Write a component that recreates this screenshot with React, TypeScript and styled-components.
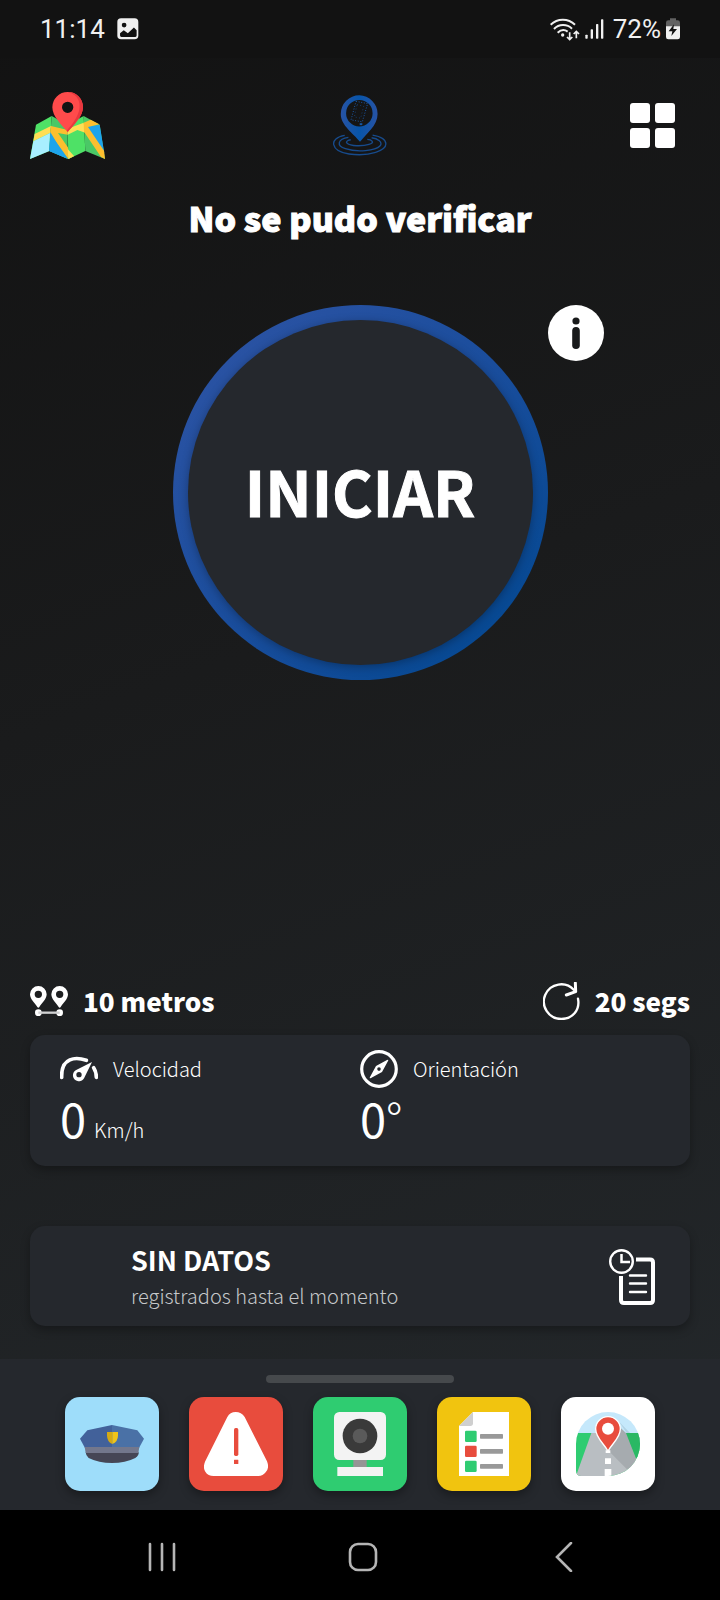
import React from "react";
import styled, { createGlobalStyle } from "styled-components";

const sans = `"Noto Sans CJK SC", "Noto Sans", sans-serif`;
const surface = "#25282d";

const GlobalStyle = createGlobalStyle`
  *, *::before, *::after { box-sizing: border-box; }
  body { margin: 0; background: #000; }
  button { border: 0; padding: 0; margin: 0; background: none; color: inherit; font: inherit; cursor: pointer; }
  h1, h2, p { margin: 0; }
  svg { display: block; }
`;

const Screen = styled.div`
  display: flex;
  flex-direction: column;
  min-height: 100vh;
  color: #fff;
  font-family: ${sans};
  background: linear-gradient(160deg, #121212 0%, #1a1b1c 40%, #23272a 90%);
`;

const StatusBar = styled.div`
  display: flex;
  align-items: center;
  justify-content: space-between;
  height: 58px;
  padding: 0 40px;
  background: #121212;
  color: #f0f0f0;
  font: 400 26px/32px Roboto, sans-serif;
`;

const StatusGroup = styled.div<{ $gap: number }>`
  display: flex;
  align-items: center;
  gap: ${(p) => p.$gap}px;
`;

const Header = styled.header`
  display: grid;
  grid-template-columns: 1fr auto 1fr;
  align-items: center;
  height: 106px;
  margin: 14px 45px 0 30px;
`;

const IconButton = styled.button<{ $align?: string }>`
  justify-self: ${(p) => p.$align ?? "start"};
`;

const LogoBox = styled.div`
  padding-left: 15px;
`;

const Title = styled.h1`
  margin-top: 20px;
  text-align: center;
  font-size: 34px;
  line-height: 40px;
  font-weight: 900;
  -webkit-text-stroke: 1px currentColor;
`;

const StartArea = styled.section`
  display: grid;
  grid-template-columns: 1fr auto 1fr;
  align-items: start;
  margin-top: 67px;
`;

const StartButton = styled.button`
  grid-column: 2;
  width: 375px;
  height: 375px;
  padding: 15px;
  border-radius: 50%;
  background: linear-gradient(135deg, #2f54a5 0%, #1a4d9c 50%, #00478f 100%);
`;

const StartFace = styled.span`
  display: flex;
  align-items: center;
  justify-content: center;
  height: 100%;
  padding-bottom: 6px;
  border-radius: 50%;
  background: ${surface};
  box-shadow: 0 2px 10px rgba(0, 0, 0, 0.3);
  font-size: 62px;
  line-height: 80px;
  font-weight: 700;
  -webkit-text-stroke: 1px currentColor;
`;

const Content = styled.main`
  display: flex;
  flex: 1;
  flex-direction: column;
  justify-content: flex-end;
  padding: 60px 30px 33px;
`;

const SettingsRow = styled.div`
  display: flex;
  justify-content: space-between;
  margin-bottom: 15px;
`;

const Setting = styled.div`
  display: flex;
  align-items: center;
  gap: 15px;
  height: 38px;
  font-size: 26px;
  line-height: 36px;
  font-weight: 900;
`;

const Panel = styled.section`
  border-radius: 15px;
  background: ${surface};
  box-shadow: 0 4px 10px rgba(0, 0, 0, 0.3);
`;

const Metrics = styled(Panel)`
  display: grid;
  grid-template-columns: 1fr 1fr;
  padding: 15px 30px 16px;
`;

const MetricLabel = styled.h2`
  display: flex;
  align-items: center;
  gap: 15px;
  height: 38px;
  font-size: 20px;
  line-height: 30px;
  font-weight: 300;
`;

const MetricValue = styled.p`
  display: flex;
  align-items: baseline;
  height: 62px;
  font-size: 47px;
  line-height: 60px;
  font-weight: 400;
`;

const Unit = styled.span<{ $large?: boolean }>`
  margin-left: ${(p) => (p.$large ? 0 : 8)}px;
  font-size: ${(p) => (p.$large ? 47 : 20)}px;
  font-weight: 300;
`;

const Records = styled(Panel)`
  display: flex;
  align-items: center;
  justify-content: space-between;
  height: 100px;
  margin-top: 60px;
  padding: 1px 35px 0 101px;
`;

const RecordsTitle = styled.h2`
  font-size: 27px;
  line-height: 38px;
  font-weight: 700;
`;

const RecordsText = styled.p`
  color: #c6c8ca;
  font-size: 20px;
  line-height: 34px;
  font-weight: 300;
`;

const Dock = styled.section`
  display: flex;
  flex-direction: column;
  align-items: center;
  gap: 14px;
  padding: 16px 30px 19px;
  background: ${surface};
`;

const Handle = styled.div`
  width: 188px;
  height: 8px;
  border-radius: 4px;
  background: #46494c;
`;

const Tiles = styled.div`
  display: flex;
  gap: 30px;
`;

const Tile = styled.button<{ $color: string }>`
  display: flex;
  align-items: center;
  justify-content: center;
  width: 94px;
  height: 94px;
  border-radius: 15px;
  background: ${(p) => p.$color};
  box-shadow: 0 4px 10px rgba(0, 0, 0, 0.35);
`;

const NavBar = styled.nav`
  display: grid;
  grid-template-columns: repeat(3, 1fr);
  align-items: center;
  justify-items: center;
  height: 90px;
  padding: 4px 55px 0 61px;
  background: #000;
`;

const PictureIcon = () => (
  <svg width="22" height="22" viewBox="350 56 65 65" aria-hidden="true">
    <rect x="351" y="57" width="62" height="62" rx="11" fill="#f0f0f0" />
    <circle cx="371" cy="77" r="7" fill="#121212" />
    <path d="M359 108v-7l11-9 12 9 18-17 8 8v16q0 4-4 4h-41q-4 0-4-4z" fill="#121212" />
  </svg>
);

const WifiIcon = () => (
  <svg width="30" height="24" viewBox="568 50 90 72" fill="none" stroke="#f0f0f0" strokeWidth="6" aria-hidden="true">
    <path d="M570 73a52 52 0 0 1 73 0M580 86a38 38 0 0 1 54-1M591 97q15-14 30-3" />
    <circle cx="606" cy="104" r="5" fill="#f0f0f0" stroke="none" />
    <path d="M627 96v21M619 110l8 8 8-8M647 114V93M639 101l8-8 8 8" strokeWidth="5" />
  </svg>
);

const SignalIcon = () => (
  <svg width="19" height="20" viewBox="675 57 57 60" fill="#f0f0f0" aria-hidden="true">
    <rect x="676" y="104" width="7" height="12" rx="2" />
    <rect x="692" y="88" width="7" height="28" rx="2" />
    <rect x="708" y="72" width="7" height="44" rx="2" />
    <rect x="723" y="58" width="7" height="58" rx="2" />
  </svg>
);

const BatteryIcon = () => (
  <svg width="14" height="22" viewBox="918 56 42 64" aria-hidden="true">
    <path d="M930 56h18v6h5q7 0 7 7v12h-42V69q0-7 7-7h5z" fill="#626262" />
    <path d="M918 80h42v32q0 7-7 7h-28q-7 0-7-7z" fill="#f0f0f0" />
    <path d="M942 74l-16 21h11l-3 14 17-21h-11z" fill="#121212" />
  </svg>
);

const MapIcon = () => (
  <svg width="75" height="67" viewBox="90 276 225 201" aria-hidden="true">
    <path d="M108 374 155 348 148 453 90 477z" fill="#4ee166" />
    <path d="M104 402 153 378 150 399 100 424z" fill="#ffde55" />
    <path d="M100 424 150 399 148 453 90 477z" fill="#a8efff" />
    <path d="M155 348 203 374V477L148 453z" fill="#4ac866" />
    <path d="M151 396 205 477 148 453z" fill="#1ea4ec" />
    <path d="M153 378 203 390V404L174 399 222 469 205 477 150 400z" fill="#fdbf2f" />
    <path d="M151 396 196 473 148 453z" fill="#1ea4ec" />
    <path d="M203 374 251 348 256 453 205 477z" fill="#4ee166" />
    <path d="M203 386 251 368 256 398 232 390 203 404zM203 447 222 468 205 477z" fill="#ffde55" />
    <path d="M251 348 299 374 315 477 256 453z" fill="#4ac866" />
    <path d="M256 380 299 374 313 460z" fill="#1ea4ec" />
    <path d="M251 368 272 359 298 373 264 381 312 452 315 477 303 471 252 395z" fill="#fdbf2f" />
    <path d="M203 276a46 46 0 0 0-46 46c0 27 28 53 46 74 18-21 46-47 46-74a46 46 0 0 0-46-46zm0 29a17 17 0 1 1 0 34 17 17 0 0 1 0-34z" fill="#ff4b4b" fillRule="evenodd" />
    <path d="M205 276c27 9 37 27 33 51-3 22-20 45-38 65l3 4c18-21 46-47 46-74 0-28-20-46-44-46z" fill="#e9373e" />
  </svg>
);

const LogoIcon = () => (
  <svg width="54" height="61" viewBox="70 43 162 184" fill="none" role="img" aria-label="Logo">
    <defs>
      <linearGradient id="logo" x1="0" x2="1">
        <stop offset="0" stopColor="#2853a4" />
        <stop offset=".5" stopColor="#0755aa" />
        <stop offset="1" stopColor="#2853a4" />
      </linearGradient>
    </defs>
    <path d="M149 44a56 56 0 0 0-56 56c0 35 38 58 58 84 20-26 53-49 53-84a56 56 0 0 0-55-56zm0 14a40 40 0 1 1 0 80 40 40 0 0 1 0-80z" fill="url(#logo)" fillRule="evenodd" />
    <path d="M139 62 174 69 158 124 124 118z" stroke="#1b58a6" strokeWidth="3" strokeDasharray="3 5" />
    <path d="M142 72 162 77 153 113 134 109z" stroke="#174f95" strokeWidth="2" strokeDasharray="3 7" />
    <path d="M150 128h8v6h-8z" fill="#1557a6" />
    <g stroke="#174b8c" strokeWidth="4">
      <path d="M105 165c-49 8-44 47 13 56 65 9 112-12 111-31 0-14-18-22-40-26" />
      <path d="M116 171c-33 5-37 25-9 34 36 12 91 6 104-8 11-11-7-23-25-25" />
      <path d="M123 178c-25 5-10 17 18 18 31 1 52-7 47-13q-4-6-15-6" />
    </g>
  </svg>
);

const GridIcon = () => (
  <svg width="45" height="45" viewBox="0 0 45 45" fill="#fff" aria-hidden="true">
    <rect width="20" height="20" rx="3" />
    <rect x="25" width="20" height="20" rx="3" />
    <rect y="25" width="20" height="20" rx="3" />
    <rect x="25" y="25" width="20" height="20" rx="3" />
  </svg>
);

const InfoIcon = () => (
  <svg width="56" height="56" viewBox="0 0 56 56" aria-hidden="true">
    <circle cx="28" cy="28" r="28" fill="#fff" />
    <circle cx="28" cy="16" r="3.6" fill="#191a1b" />
    <rect x="24.2" y="22" width="7.6" height="22" rx="3.8" fill="#191a1b" />
  </svg>
);

const DistanceIcon = () => (
  <svg width="38" height="30" viewBox="90 78 114 90" aria-hidden="true">
    {[115, 179].map((x) => (
      <g key={x} transform={`translate(${x} 0)`} fill="#fff">
        <path d="M0 78a25 25 0 0 0-25 25c0 15 15 26 22 38q3 4 6 0c7-12 22-23 22-38A25 25 0 0 0 0 78zm0 14a11 11 0 1 1 0 22 11 11 0 0 1 0-22z" fillRule="evenodd" />
        <circle cy="158" r="10" />
      </g>
    ))}
    <path d="M115 158h64" stroke="#d0d1d2" strokeWidth="7" />
  </svg>
);

const RefreshIcon = () => (
  <svg width="37" height="38" viewBox="545 66 111 114" fill="none" stroke="#fff" strokeWidth="7" strokeLinecap="round" strokeLinejoin="round" aria-hidden="true">
    <path d="M650 116c7 36-18 61-50 61a52 52 0 1 1 38-87" />
    <path d="M642 69 643 95 615 105" strokeWidth="9" />
  </svg>
);

const SpeedIcon = () => (
  <svg width="38" height="38" viewBox="180 270 114 114" aria-hidden="true">
    <path d="M185 352c-2-61 43-62 74-51M281 323q8 12 8 29" fill="none" stroke="#fff" strokeWidth="11" strokeLinecap="round" />
    <path d="M276 306 230 329a18 18 0 1 0 24 22zM237 336a8 8 0 1 1 0 16 8 8 0 0 1 0-16z" fill="#fff" fillRule="evenodd" />
  </svg>
);

const CompassIcon = () => (
  <svg width="38" height="38" viewBox="0 0 38 38" aria-hidden="true">
    <circle cx="19" cy="19" r="17.3" fill="none" stroke="#fff" strokeWidth="3.2" />
    <path d="M27 10q2-1 1 1l-6 11-11 6q-2 1-1-1l6-11zM19 17.3a1.8 1.8 0 1 0 0 3.6 1.8 1.8 0 0 0 0-3.6z" fill="#fff" fillRule="evenodd" />
  </svg>
);

const HistoryIcon = () => (
  <svg width="46" height="56" viewBox="0 0 46 56" fill="none" stroke="#fff" aria-hidden="true">
    <circle cx="12.5" cy="12.5" r="11.3" strokeWidth="2.4" />
    <path d="M12.5 5v8H21" strokeWidth="2.5" />
    <path d="M27 10.5h14q3 0 3 3V51q0 3-3 3H15q-3 0-3-3V27" strokeWidth="4" />
    <path d="M21 26.5h16M21 34.5h16M21 43h16" strokeWidth="2.4" strokeLinecap="round" />
  </svg>
);

const PoliceIcon = () => (
  <svg width="64" height="38" viewBox="120 195 192 114" aria-hidden="true">
    <path d="M216 195 142 211 120 236 137 268H216z" fill="#42619a" />
    <path d="M216 195 292 211 312 236 295 268H216z" fill="#4a71a6" />
    <path d="M137 277H296q2 8-10 17-30 15-70 15t-70-15q-9-8-9-17z" fill="#464655" />
    <path d="M134 261H298L295 279H137z" fill="#73778c" />
    <path d="M201 216h16v36q-16-6-16-26z" fill="#d5aa14" />
    <path d="M217 216h17v10q0 20-17 26z" fill="#f0c419" />
  </svg>
);

const AlertIcon = () => (
  <svg width="64" height="64" viewBox="492 156 192 192" aria-hidden="true">
    <path d="M562 171q8-15 25-15t27 15l67 133q8 20-4 33-8 11-22 11H521q-17 0-25-13-8-12-1-30z" fill="#fff" />
    <rect x="582" y="204" width="13" height="84" rx="5" fill="#e84c3d" />
    <rect x="582" y="299" width="13" height="13" rx="1" fill="#e84c3d" />
  </svg>
);

const CameraIcon = () => (
  <svg width="52" height="64" viewBox="132 156 156 192" aria-hidden="true">
    <rect x="190" y="294" width="40" height="30" fill="#959595" />
    <rect x="132" y="156" width="156" height="144" rx="16" fill="#f3f3f3" />
    <circle cx="210" cy="228" r="52" fill="#3a3a3a" />
    <circle cx="210" cy="228" r="22" fill="#5a5a5a" />
    <rect x="142" y="321" width="137" height="27" fill="#f3f3f3" />
  </svg>
);

const ChecklistIcon = () => (
  <svg width="50" height="64" viewBox="507 156 150 192" aria-hidden="true">
    <path d="M549 156H657V348H507V198z" fill="#fff" />
    <path d="M549 156V190q0 8-8 8H507z" fill="#cfcfcf" />
    {["#2fcc71", "#e84c3d", "#2fcc71"].map((color, i) => (
      <g key={i} transform={`translate(0 ${i * 45})`}>
        <rect x="525" y="212" width="35" height="34" rx="4" fill={color} />
        <rect x="570" y="222" width="69" height="14" rx="2" fill="#999" />
      </g>
    ))}
  </svg>
);

const RoadIcon = () => (
  <svg width="64" height="64" viewBox="858 156 192 192" aria-hidden="true">
    <defs>
      <clipPath id="road">
        <path d="M954 156a96 96 0 0 1 0 192h-80q-16 0-16-16v-80a96 96 0 0 1 96-96z" />
      </clipPath>
    </defs>
    <g clipPath="url(#road)">
      <path d="M858 156h192v64H858z" fill="#c5e8fb" />
      <path d="M858 219h192v129H858z" fill="#2fcc71" />
      <path d="M986 184 1050 250V219H1010z" fill="#b1d3e4" />
      <path d="M1005 219h45v100z" fill="#2ab864" />
      <path d="M904 219h101l53 129H858z" fill="#b9bec2" />
      <path d="M954 271 988 200l20 19 50 129h-27z" fill="#a6abaf" />
      <path d="M947 271h14v8h-14zM945 295h18v17h-18zM944 327h20v21h-20z" fill="#fff" />
    </g>
    <path d="M954 170a37 37 0 0 0-37 37c0 26 24 43 37 66 13-23 37-40 37-66a37 37 0 0 0-37-37z" fill="#e84c3d" stroke="#fff" strokeWidth="4" />
    <circle cx="954" cy="206" r="18" fill="#fff" />
  </svg>
);

const navIcon = { fill: "none", stroke: "#b5b5b5", strokeLinecap: "round", strokeWidth: 2.6, "aria-hidden": true } as const;

const tiles = [
  { label: "Policía", color: "#9eddfa", Icon: PoliceIcon },
  { label: "Alerta", color: "#e84c3d", Icon: AlertIcon },
  { label: "Cámara", color: "#2fcc71", Icon: CameraIcon },
  { label: "Lista", color: "#f1c40f", Icon: ChecklistIcon },
  { label: "Ruta", color: "#ffffff", Icon: RoadIcon },
];

export default function App() {
  return (
    <>
      <GlobalStyle />
      <Screen>
        <StatusBar>
          <StatusGroup $gap={12}>
            <span>11:14</span>
            <PictureIcon />
          </StatusGroup>
          <StatusGroup $gap={5}>
            <WifiIcon />
            <StatusGroup $gap={9}>
              <SignalIcon />
              <span>72%</span>
            </StatusGroup>
            <BatteryIcon />
          </StatusGroup>
        </StatusBar>

        <Header>
          <IconButton aria-label="Mapa">
            <MapIcon />
          </IconButton>
          <LogoBox>
            <LogoIcon />
          </LogoBox>
          <IconButton $align="end" aria-label="Menú">
            <GridIcon />
          </IconButton>
        </Header>

        <Title>No se pudo verificar</Title>

        <StartArea>
          <StartButton>
            <StartFace>INICIAR</StartFace>
          </StartButton>
          <IconButton aria-label="Información">
            <InfoIcon />
          </IconButton>
        </StartArea>

        <Content>
          <SettingsRow>
            <Setting>
              <DistanceIcon />
              10 metros
            </Setting>
            <Setting>
              <RefreshIcon />
              20 segs
            </Setting>
          </SettingsRow>

          <Metrics>
            <div>
              <MetricLabel>
                <SpeedIcon />
                Velocidad
              </MetricLabel>
              <MetricValue>
                0<Unit>Km/h</Unit>
              </MetricValue>
            </div>
            <div>
              <MetricLabel>
                <CompassIcon />
                Orientación
              </MetricLabel>
              <MetricValue>
                0<Unit $large>°</Unit>
              </MetricValue>
            </div>
          </Metrics>

          <Records>
            <div>
              <RecordsTitle>SIN DATOS</RecordsTitle>
              <RecordsText>registrados hasta el momento</RecordsText>
            </div>
            <HistoryIcon />
          </Records>
        </Content>

        <Dock>
          <Handle />
          <Tiles>
            {tiles.map(({ label, color, Icon }) => (
              <Tile key={label} $color={color} aria-label={label}>
                <Icon />
              </Tile>
            ))}
          </Tiles>
        </Dock>

        <NavBar>
          <button aria-label="Recientes">
            <svg width="28" height="30" viewBox="0 0 28 30" {...navIcon}>
              <path d="M2 2v26M14 2v26M26 2v26" />
            </svg>
          </button>
          <button aria-label="Inicio">
            <svg width="30" height="30" viewBox="0 0 30 30" {...navIcon}>
              <rect x="2" y="2" width="26" height="26" rx="8" />
            </svg>
          </button>
          <button aria-label="Atrás">
            <svg width="18" height="30" viewBox="0 0 18 30" {...navIcon}>
              <path d="M16 1 2 15l14 14" />
            </svg>
          </button>
        </NavBar>
      </Screen>
    </>
  );
}
